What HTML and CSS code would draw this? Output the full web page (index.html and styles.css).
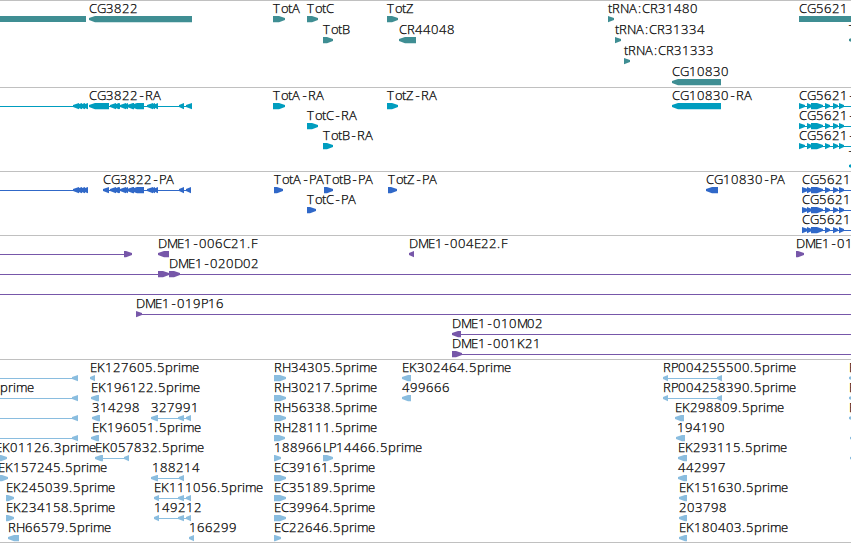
FILE: index.html
```
<!DOCTYPE html>
<html lang="en">
<head>
  <meta charset="UTF-8" />
  <title>Genome Map</title>
  <link rel="stylesheet" href="styles.css">
</head>
<body>

<main class="map">
  <svg class="track genes" id="genes"></svg>
  <svg class="track transcripts" id="transcripts"></svg>
  <svg class="track proteins" id="proteins"></svg>
  <svg class="track clones" id="clones"></svg>
  <svg class="track ests" id="ests"></svg>
</main>

<script src="map.js"></script>
</body>
</html>
```
FILE: styles.css
```
* {
  box-sizing: border-box;
}

body {
  margin: 0;
  background: #fff;
  overflow: hidden;
}

.map {
  display: flex;
  flex-direction: column;
  width: 851px;
  border-bottom: 1px solid #c0c0c0;
}

.track {
  display: block;
  width: 100%;
  border-top: 1px solid #c0c0c0;
  font-family: "Open Sans", "Noto Sans", sans-serif;
  font-size: 13px;
  font-weight: 300;
  overflow: hidden;
}

/* thin outline so the light weight still reads as black */
.track text {
  fill: #000;
  stroke: #000;
  stroke-width: 0.25px;
}

.genes {
  height: 87px;
  fill: #3f8e93;
}

.transcripts {
  height: 84px;
  fill: #009dbf;
}

.proteins {
  height: 64px;
  fill: #3068c8;
}

.clones {
  height: 124px;
  fill: #7757a9;
}

.ests {
  height: 183px;
  fill: #8abddf;
}
```
FILE: map.js
```
// Each feature: [row, label, label x, glyphs]
// glyphs: "<a b" exon pointing left, ">a b" pointing right, "-a b" intron, "#a b" plain block
const upstream = '-0 73,<73 79,<76 82,<79 85,<82 88';
const exons = '<110 116,<113 119,<116 120,<120 126,<123 128,<127 134,<131 144,<147 153,<150 155,<153 158,<179 184,<186 192';
const cg5621 = '>807 812,>811 823,>825 830,>833 838,>839 844';
const spliced = '-154 184,<178 184,<186 191,-184 190';

const tracks = {
  genes: [
    [0, '', 0, '#0 86'],
    [0, 'CG3822', 89, '<89 192'],
    [0, 'TotA', 273, '>273 285'],
    [0, 'TotC', 307, '>307 318'],
    [0, 'TotZ', 387, '>387 398'],
    [0, 'tRNA:CR31480', 608, '>608 614'],
    [0, 'CG5621', 799, '#799 851'],
    [1, 'TotB', 323, '>323 333'],
    [1, 'CR44048', 399, '<399 416'],
    [1, 'tRNA:CR31334', 615, '>615 621'],
    [1, 'T', 849, '<849 858'],
    [2, 'tRNA:CR31333', 624, '>624 630'],
    [3, 'CG10830', 672, '<672 721']
  ],
  transcripts: [
    [0, '', 0, upstream],
    [0, 'CG3822-RA', 89, '-89 192,<89 109,' + exons],
    [0, 'TotA-RA', 273, '>273 285'],
    [0, 'TotZ-RA', 387, '>387 398'],
    [0, 'CG10830-RA', 672, '<672 721'],
    [0, 'CG5621-', 799, '-799 851,>799 805,' + cg5621],
    [1, 'TotC-RA', 307, '>307 318'],
    [1, 'CG5621-', 799, '-799 851,>799 805,' + cg5621],
    [2, 'TotB-RA', 323, '>323 333'],
    [2, 'CG5621-', 799, '-799 851,>799 805,' + cg5621],
    [3, 'T', 849, '<849 858']
  ],
  proteins: [
    [0, '', 0, upstream],
    [0, 'CG3822-PA', 103, '-103 191,<103 109,' + exons.replace('192', '191')],
    [0, 'TotA-PA', 274, '>274 283'],
    [0, 'TotB-PA', 324, '>324 333'],
    [0, 'TotZ-PA', 388, '>388 397'],
    [0, 'CG10830-PA', 706, '<706 718'],
    [0, 'CG5621', 802, '-802 851,>802 808,' + cg5621],
    [1, 'TotC-PA', 307, '>307 316'],
    [1, 'CG5621', 802, '-802 851,>802 808,' + cg5621],
    [2, 'CG5621', 802, '-802 851,>802 808,' + cg5621]
  ],
  clones: [
    [0, '', 0, '-0 124,>124 132'],
    [0, 'DME1-006C21.F', 158, '<158 169'],
    [0, 'DME1-004E22.F', 409, '<409 414'],
    [0, 'DME1-01', 796, '>796 804'],
    [1, 'DME1-020D02', 169, '-0 851,>158 169,>169 180'],
    [2, '', 0, '-0 851'],
    [3, 'DME1-019P16', 136, '>136 142,-139 851'],
    [4, 'DME1-010M02', 452, '<452 461,-460 851'],
    [5, 'DME1-001K21', 452, '>452 462,-460 851']
  ],
  ests: [
    [0, '', 0, '-0 74,<72 78'],
    [0, 'EK127605.5prime', 90, '<90 95'],
    [0, 'RH34305.5prime', 274, '>274 286'],
    [0, 'EK302464.5prime', 402, '<402 411'],
    [0, 'RP004255500.5prime', 663, '<663 668,-667 718,<717 722'],
    [0, 'E', 849, '<849 858'],
    [1, 'prime', 0, '-0 74,<72 78'],
    [1, 'EK196122.5prime', 91, '<91 99'],
    [1, 'RH30217.5prime', 274, '>274 286'],
    [1, '499666', 402, '<402 411'],
    [1, 'RP004258390.5prime', 663, '<663 668,-667 718,<717 722'],
    [1, 'E', 849, '<849 858'],
    [2, '', 0, '-0 74,<72 78'],
    [2, '314298', 92, '<92 100'],
    [2, '327991', 151, '<151 158,' + spliced],
    [2, 'RH56338.5prime', 274, '>274 286'],
    [2, 'EK298809.5prime', 675, '<675 684'],
    [2, 'E', 849, '<849 858'],
    [3, '', 0, '-0 74,<72 78'],
    [3, 'EK196051.5prime', 92, '<91 99'],
    [3, 'RH28111.5prime', 274, '>274 285'],
    [3, '194190', 677, '<676 685'],
    [3, '', 0, '<850 859'],
    [4, 'EK01126.3prime', -5, '>-3 7'],
    [4, 'EK057832.5prime', 95, '<95 103,-102 128,<124 129'],
    [4, '188966', 274, '>274 281'],
    [4, 'LP14466.5prime', 323, '>323 333'],
    [4, 'EK293115.5prime', 678, '<678 687'],
    [4, '', 0, '<850 859'],
    [5, 'EK157245.5prime', -2, '>-2 8'],
    [5, '188214', 152, '<151 158,-157 180,<179 184'],
    [5, 'EC39161.5prime', 274, '>274 286'],
    [5, '442997', 678, '<678 687'],
    [6, 'EK245039.5prime', 6, '>6 14'],
    [6, 'EK111056.5prime', 154, '<154 159,' + spliced],
    [6, 'EC35189.5prime', 274, '>274 286'],
    [6, 'EK151630.5prime', 679, '<679 687'],
    [7, 'EK234158.5prime', 6, '>6 14'],
    [7, '149212', 154, '<154 159,' + spliced],
    [7, 'EC39964.5prime', 274, '>274 286'],
    [7, '203798', 679, '<679 687'],
    [8, 'RH66579.5prime', 8, '<8 19'],
    [8, '166299', 189, '<189 194'],
    [8, 'EC22646.5prime', 274, '>274 281'],
    [8, 'EK180403.5prime', 679, '<679 687']
  ]
};

// whole pixel advances for the labels, 8 for anything not listed
const advance = {
  A: 9, D: 9, E: 7, F: 7, G: 9, H: 9, L: 6, M: 10, N: 9, P: 7,
  o: 7, t: 4, r: 5, i: 3, m: 11, e: 7, '-': 7, '.': 4, ':': 4
};

function drawLabel(text, x, y) {
  const xs = [];
  for (const c of text) {
    // centre the narrow hyphen in its cell
    xs.push(c === '-' ? x + 1.5 : x);
    x += advance[c] || 8;
  }
  return `<text x="${xs.join(' ')}" y="${y}">${text}</text>`;
}

function drawGlyph(glyph, y) {
  const [a, b] = glyph.slice(1).split(' ').map(Number);
  const head = Math.min(6, b - a);
  switch (glyph[0]) {
    case '-': return `<rect x="${a}" y="${y + 3}" width="${b - a}" height="1"/>`;
    case '#': return `<rect x="${a}" y="${y}" width="${b - a}" height="6"/>`;
    case '<': return `<path d="M${a} ${y + 2}V${y + 4}L${a + head} ${y + 6.3}H${b}V${y}H${a + head}Z"/>`;
    case '>': return `<path d="M${b} ${y + 2}V${y + 4}L${b - head} ${y + 6.3}H${a}V${y}H${b - head}Z"/>`;
  }
}

for (const id in tracks) {
  const step = id === 'genes' ? 21 : 20;
  document.getElementById(id).innerHTML = tracks[id].map(([row, label, x, glyphs]) => {
    const top = row * step;
    return glyphs.split(',').map(g => drawGlyph(g, top + 15)).join('') +
      (label ? drawLabel(label, x, top + 12) : '');
  }).join('');
}
```
